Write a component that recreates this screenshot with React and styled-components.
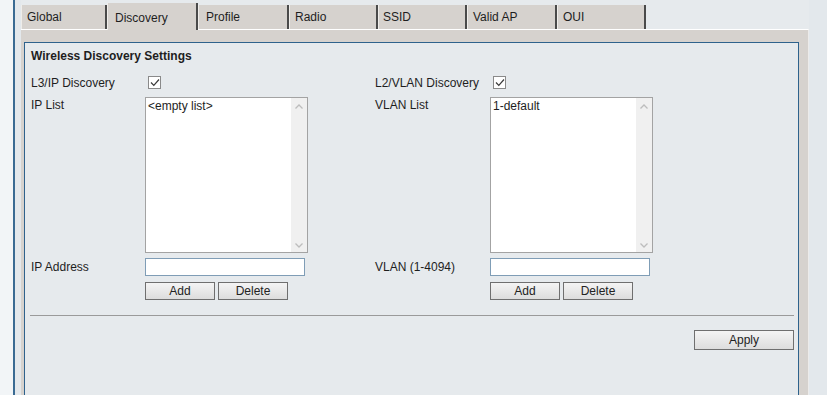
import React from "react";
import styled, { createGlobalStyle } from "styled-components";

const Global = createGlobalStyle`
  html, body { margin: 0; padding: 0; }
  body {
    background: #f2f5f7;
    font-family: "Liberation Sans", Arial, sans-serif;
    font-size: 12px;
    color: #1e1e1e;
    overflow: hidden;
  }
`;

const Page = styled.div`
  margin-left: 13px;
  border-left: 2px solid #3a6b93;
  background: #e3e8ec;
  padding-left: 6px;
  height: 395px;
  display: flex;
  flex-direction: column;
`;

const Frame = styled.div`
  width: 788px;
  flex: 1;
  display: flex;
  flex-direction: column;
`;

const TabRow = styled.div`
  display: flex;
  align-items: flex-end;
  height: 29px;
  background: #e6eaed;
`;

const Tab = styled.div`
  box-sizing: border-box;
  width: ${(p) => p.$w}px;
  height: ${(p) => (p.$active ? 27 : 24)}px;
  padding-left: ${(p) => p.$pad}px;
  background: #d6d2ce;
  border-left: 1px solid #efedea;
  border-right: 2px solid #4a4a4a;
  display: flex;
  align-items: center;
  padding-top: ${(p) => (p.$active ? 2 : 0)}px;
  color: #1e1e1e;
  margin-bottom: ${(p) => (p.$active ? -1 : 0)}px;
  position: relative;
  z-index: ${(p) => (p.$active ? 2 : 1)};
`;

const Panel = styled.div`
  flex: 1;
  background: #d6d2ce;
  border-top: 1px solid #ffffff;
  border-right: 1px solid #ecebea;
  padding: 12px 9px 0 3px;
  display: flex;
`;

const Box = styled.div`
  flex: 1;
  border: 1px solid #2e628c;
  border-bottom: none;
  background: #e6eaed;
  padding: 5px 4px 0 6px;
`;

const Heading = styled.div`
  font-weight: bold;
  line-height: 16px;
  height: 16px;
  margin-bottom: 10px;
`;

const Columns = styled.div`
  display: grid;
  grid-template-columns: 344px 1fr;
`;

const Column = styled.div`
  display: grid;
  grid-template-columns: ${(p) => p.$label}px auto;
  grid-template-rows: 18px 156px 18px 18px;
  row-gap: 5px;
  align-items: center;
  & > :nth-child(n + 5) { margin-top: -1px; }
  & > :nth-child(n + 7) { margin-top: 1px; }
`;

const Label = styled.div`
  line-height: 14px;
  align-self: ${(p) => (p.$top ? "start" : "center")};
  padding-top: ${(p) => (p.$top ? 1 : 0)}px;
`;

const Check = styled.span`
  box-sizing: border-box;
  width: 13px;
  height: 13px;
  margin-left: 3px;
  border: 1px solid #8a8a8a;
  background: #fff;
  display: inline-flex;
  align-items: center;
  justify-content: center;
`;

const List = styled.div`
  box-sizing: border-box;
  width: 163px;
  height: 156px;
  border: 1px solid #a3a3a3;
  background: #fff;
  display: flex;
  align-self: start;
`;

const ListItems = styled.div`
  flex: 1;
  padding: 1px 2px;
  line-height: 14px;
`;

const Scroll = styled.div`
  width: 16px;
  background: #f0f0f0;
  display: flex;
  flex-direction: column;
  justify-content: space-between;
  align-items: center;
  padding: 6px 0 4px;
`;

const Input = styled.input`
  box-sizing: border-box;
  width: 160px;
  height: 18px;
  border: 1px solid #7f9db6;
  background: #fff;
  padding: 0 2px;
  font: inherit;
  outline: none;
`;

const Buttons = styled.div`
  display: flex;
  gap: 3px;
`;

const Button = styled.button`
  box-sizing: border-box;
  width: ${(p) => p.$w}px;
  height: ${(p) => p.$h}px;
  border: 1px solid #6f6f6f;
  background: linear-gradient(#f4f4f4, #dddddd);
  font-family: "Liberation Sans", Arial, sans-serif;
  font-size: 12px;
  color: #222;
  padding: 0;
  line-height: 1;
`;

const Separator = styled.div`
  height: 1px;
  background: #9a9a9a;
  margin: 16px 0 14px -1px;
`;

const Footer = styled.div`
  display: flex;
  justify-content: flex-end;
`;

const CheckIcon = () => (
  <svg width="10" height="9" viewBox="0 0 10 9">
    <path d="M1 4.5 L3.8 7.3 L9 1.5" fill="none" stroke="#3a3a3a" strokeWidth="1.2" />
  </svg>
);

const Chevron = ({ down }) => (
  <svg width="8" height="5" viewBox="0 0 8 5">
    <path
      d={down ? "M0.5 0.5 L4 4 L7.5 0.5" : "M0.5 4.5 L4 1 L7.5 4.5"}
      fill="none"
      stroke="#bdbdbd"
      strokeWidth="1.3"
    />
  </svg>
);

const tabs = [
  { name: "Global", w: 86, pad: 5 },
  { name: "Discovery", w: 91, pad: 7, active: true },
  { name: "Profile", w: 91, pad: 7 },
  { name: "Radio", w: 89, pad: 5 },
  { name: "SSID", w: 89, pad: 4 },
  { name: "Valid AP", w: 90, pad: 5 },
  { name: "OUI", w: 89, pad: 5 },
];

const Section = ({ checkLabel, listLabel, items, inputLabel, labelW }) => (
  <Column $label={labelW}>
    <Label>{checkLabel}</Label>
    <div>
      <Check>
        <CheckIcon />
      </Check>
    </div>
    <Label $top>{listLabel}</Label>
    <List>
      <ListItems>{items}</ListItems>
      <Scroll>
        <Chevron />
        <Chevron down />
      </Scroll>
    </List>
    <Label>{inputLabel}</Label>
    <Input />
    <div />
    <Buttons>
      <Button $w={70} $h={18}>Add</Button>
      <Button $w={70} $h={18}>Delete</Button>
    </Buttons>
  </Column>
);

export default function App() {
  return (
    <>
      <Global />
      <Page>
        <Frame>
          <TabRow>
            {tabs.map((t) => (
              <Tab key={t.name} $w={t.w} $pad={t.pad} $active={t.active}>
                {t.name}
              </Tab>
            ))}
          </TabRow>
          <Panel>
            <Box>
              <Heading>Wireless Discovery Settings</Heading>
              <Columns>
                <Section
                  checkLabel="L3/IP Discovery"
                  listLabel="IP List"
                  items="<empty list>"
                  inputLabel="IP Address"
                  labelW={114}
                />
                <Section
                  checkLabel="L2/VLAN Discovery"
                  listLabel="VLAN List"
                  items="1-default"
                  inputLabel="VLAN (1-4094)"
                  labelW={115}
                />
              </Columns>
              <Separator />
              <Footer>
                <Button $w={100} $h={20}>Apply</Button>
              </Footer>
            </Box>
          </Panel>
        </Frame>
      </Page>
    </>
  );
}
